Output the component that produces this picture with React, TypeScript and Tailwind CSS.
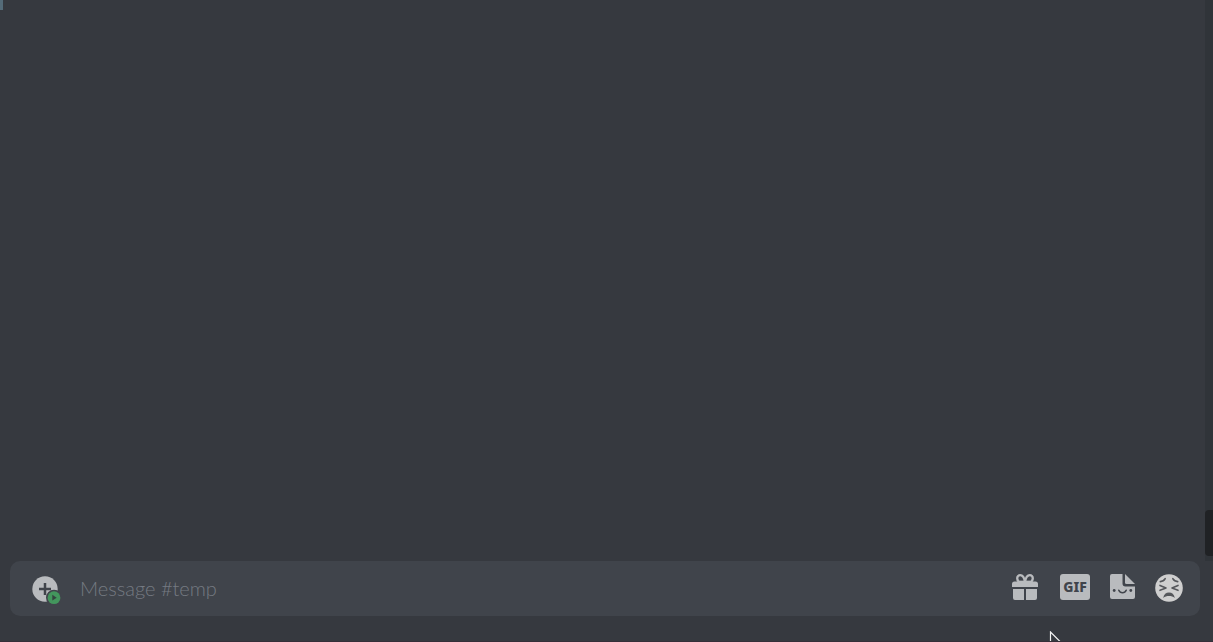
import { useState } from "react";

const AttachIcon = () => (
  <svg width="30" height="30" viewBox="0 0 30 30" fill="none">
    <circle cx="14" cy="14" r="12.7" fill="#b9bbbe" />
    <path d="M14 8v12M8 14h12" stroke="#40444b" strokeWidth="2.5" />
    <circle cx="23" cy="22.700" r="8" fill="#40444b" />
    <circle cx="23" cy="22.700" r="6.400" fill="#43965d" />
    <path d="M21.300 19.800v5.800l4.400-2.900z" fill="#34443f" />
  </svg>
);

const GiftIcon = () => (
  <svg width="26" height="26" viewBox="0 0 26 26" fill="none">
    <g stroke="#b9bbbe" strokeWidth="2.300">
      <path d="M13 8.400C12.500 4.800 11.200 1.200 8.200 1.200a3 3 0 0 0-3 3c0 2.100 1.300 3.600 3.200 4.200" />
      <path d="M13 8.400c.5-3.600 1.800-7.200 4.800-7.200a3 3 0 0 1 3 3c0 2.100-1.300 3.600-3.200 4.200" />
      <path d="M8 7.800h10" />
    </g>
    <path
      d="M2.500 7.500h21A2.500 2.500 0 0 1 26 10v3H0v-3a2.500 2.500 0 0 1 2.500-2.500zM1 15h11v11H3a2 2 0 0 1-2-2zM14 15h11v9a2 2 0 0 1-2 2h-9z"
      fill="#b9bbbe"
    />
  </svg>
);

const StickerIcon = () => (
  <svg width="25" height="25" viewBox="0 0 25 25" fill="none">
    <path
      d="M2 0h10.500v9.500a3 3 0 0 0 3 3H25V23a2 2 0 0 1-2 2H2a2 2 0 0 1-2-2V2a2 2 0 0 1 2-2z"
      fill="#b9bbbe"
    />
    <path d="M15 0l10 10h-8.500A1.500 1.500 0 0 1 15 8.500z" fill="#b9bbbe" />
    <g fill="#40444b">
      <circle cx="4.200" cy="16.500" r="1.400" />
      <circle cx="20.800" cy="16.500" r="1.400" />
    </g>
    <path
      d="M8.800 16.300c.7 1.600 2 2.500 3.700 2.500s3-.9 3.700-2.500"
      stroke="#40444b"
      strokeWidth="1.600"
      strokeLinecap="round"
    />
  </svg>
);

const EmojiIcon = () => (
  <svg width="28" height="28" viewBox="0 0 28 28" fill="none">
    <circle cx="14" cy="14" r="13.800" fill="#cfcfcf" />
    <g stroke="#55575b" strokeWidth="1.600" strokeLinecap="round">
      <path d="M5.300 7.600c2.200-.1 3.900-1.100 4.900-2.900M22.700 7.600c-2.200-.1-3.900-1.100-4.900-2.900" />
      <path d="M5 11.400l6 2.600-6 2.300M23 11.400L17 14l6 2.300" strokeLinejoin="round" />
    </g>
    <path
      d="M8.200 24c.7-3.600 2.800-5.400 5.800-5.400s5.100 1.800 5.800 5.400c-1.700-1.400-3.500-2-5.800-2s-4.100.6-5.800 2z"
      fill="#55575b"
    />
  </svg>
);

const Cursor = () => (
  <svg
    className="pointer-events-none absolute bottom-0 right-[152px]"
    width="12"
    height="10"
    viewBox="0 0 12 10"
  >
    <path d="M1.500 12V1l11 11z" fill="#36393f" stroke="#f2f2f2" strokeWidth="1.200" />
  </svg>
);

const App = () => {
  const [message, setMessage] = useState<string>("");

  return (
    <div className="relative flex min-h-screen flex-col overflow-hidden border-b border-[#352f39] bg-[#36393f] font-[Lato,sans-serif]">
      <main className="flex flex-1 justify-between">
        <div className="h-[10px] w-[3px] bg-[#546b78]" />
        <div className="flex w-2 flex-col justify-end bg-[#303439] pb-[5px]">
          <div className="h-[46px] rounded-l bg-[#202225]" />
        </div>
      </main>

      <form
        className="mb-[25px] ml-[10px] mr-[13px] flex h-[55px] items-center rounded-[10px] bg-[#40444b] pl-[21px] pr-[17px]"
        onSubmit={(e) => e.preventDefault()}
      >
        <button type="button" aria-label="Attach" className="mt-[2px]">
          <AttachIcon />
        </button>
        <input
          type="text"
          aria-label="Message"
          value={message}
          onChange={(e) => setMessage(e.target.value)}
          placeholder="Message #temp"
          className="ml-[19px] min-w-0 flex-1 bg-transparent pb-[2px] text-xl font-light text-gray-200 outline-none placeholder:text-[#757a82]"
        />
        <div className="flex items-start pb-px">
          <button type="button" aria-label="Gift" className="mr-[22px]">
            <GiftIcon />
          </button>
          <button
            type="button"
            className="mr-5 h-[26px] w-[30px] rounded-[3px] bg-[#b9bbbe] text-center font-['Noto_Sans',sans-serif] text-sm leading-[26px] font-extrabold text-[#40444b]"
          >
            GIF
          </button>
          <button type="button" aria-label="Sticker" className="mr-5">
            <StickerIcon />
          </button>
          <button type="button" aria-label="Emoji">
            <EmojiIcon />
          </button>
        </div>
      </form>
      <Cursor />
    </div>
  );
};

export default App;
